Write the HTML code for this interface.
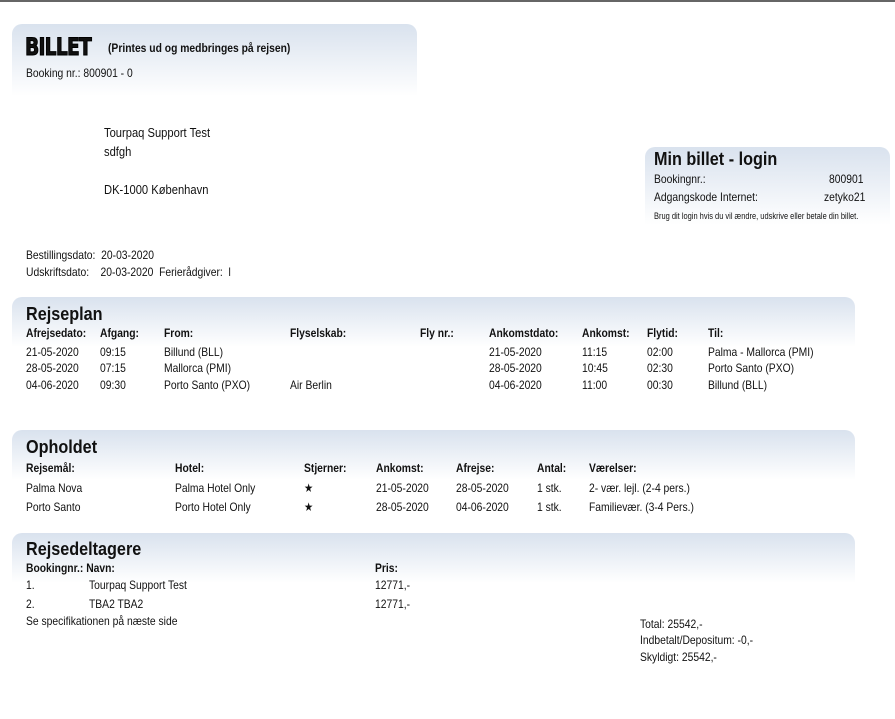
<!DOCTYPE html>
<html><head><meta charset="utf-8"><style>
body{margin:0;width:895px;height:719px;position:relative;background:#fff;overflow:hidden;font-family:"Liberation Sans",sans-serif;font-size:12px;color:#111}
.t{position:absolute;white-space:nowrap;line-height:14px;transform:scaleX(.86);transform-origin:left}
.b{font-weight:bold}
.box{position:absolute;border-radius:10px 10px 0 0;background:linear-gradient(#d9e2ee,#fff)}
.h{position:absolute;font-family:"Liberation Sans",sans-serif;font-size:18px;line-height:20px;white-space:nowrap;font-weight:bold;transform:scaleX(.9);transform-origin:left}
</style></head><body>
<div style="position:absolute;left:0;top:0;width:895px;height:2px;background:#666"></div>
<div class="box" style="left:12px;top:24px;width:405px;height:72px"></div>
<div class="t" style="left:25px;top:33px;font-family:'DejaVu Sans','Liberation Sans',sans-serif;font-weight:900;font-size:24px;line-height:28px;transform:scaleX(.78);letter-spacing:-1px;-webkit-text-stroke:1px #000">BILLET</div>
<div class="t b" style="left:108px;top:41px">(Printes ud og medbringes på rejsen)</div>
<div class="t" style="left:26px;top:66px">Booking nr.: 800901 - 0</div>

<div class="t" style="left:104px;top:126px;font-size:13px">Tourpaq Support Test</div>
<div class="t" style="left:104px;top:145px;font-size:13px">sdfgh</div>
<div class="t" style="left:104px;top:183px;font-size:13px">DK-1000 København</div>

<div class="box" style="left:645px;top:147px;width:245px;height:78px"></div>
<div class="h" style="left:654px;top:149px">Min billet - login</div>
<div class="t" style="left:654px;top:172px">Bookingnr.:</div>
<div class="t" style="left:829px;top:172px">800901</div>
<div class="t" style="left:654px;top:190px">Adgangskode Internet:</div>
<div class="t" style="left:824px;top:190px">zetyko21</div>
<div class="t" style="left:654px;top:209px;font-size:9px;transform:scaleX(.83)">Brug dit login hvis du vil ændre, udskrive eller betale din billet.</div>

<div class="t" style="left:26px;top:248px">Bestillingsdato:&nbsp; 20-03-2020</div>
<div class="t" style="left:26px;top:265px">Udskriftsdato:&nbsp;&nbsp;&nbsp; 20-03-2020&nbsp; Ferierådgiver:&nbsp; l</div>

<div class="box" style="left:12px;top:297px;width:843px;height:50px"></div>
<div class="h" style="left:26px;top:304px">Rejseplan</div>
<div class="t b" style="left:26px;top:326px">Afrejsedato:</div><div class="t b" style="left:100px;top:326px">Afgang:</div><div class="t b" style="left:164px;top:326px">From:</div><div class="t b" style="left:290px;top:326px">Flyselskab:</div><div class="t b" style="left:420px;top:326px">Fly nr.:</div><div class="t b" style="left:489px;top:326px">Ankomstdato:</div><div class="t b" style="left:582px;top:326px">Ankomst:</div><div class="t b" style="left:647px;top:326px">Flytid:</div><div class="t b" style="left:708px;top:326px">Til:</div>
<div class="t" style="left:26px;top:345px">21-05-2020</div><div class="t" style="left:100px;top:345px">09:15</div><div class="t" style="left:164px;top:345px">Billund (BLL)</div><div class="t" style="left:489px;top:345px">21-05-2020</div><div class="t" style="left:582px;top:345px">11:15</div><div class="t" style="left:647px;top:345px">02:00</div><div class="t" style="left:708px;top:345px">Palma - Mallorca (PMI)</div>
<div class="t" style="left:26px;top:361px">28-05-2020</div><div class="t" style="left:100px;top:361px">07:15</div><div class="t" style="left:164px;top:361px">Mallorca (PMI)</div><div class="t" style="left:489px;top:361px">28-05-2020</div><div class="t" style="left:582px;top:361px">10:45</div><div class="t" style="left:647px;top:361px">02:30</div><div class="t" style="left:708px;top:361px">Porto Santo (PXO)</div>
<div class="t" style="left:26px;top:378px">04-06-2020</div><div class="t" style="left:100px;top:378px">09:30</div><div class="t" style="left:164px;top:378px">Porto Santo (PXO)</div><div class="t" style="left:290px;top:378px">Air Berlin</div><div class="t" style="left:489px;top:378px">04-06-2020</div><div class="t" style="left:582px;top:378px">11:00</div><div class="t" style="left:647px;top:378px">00:30</div><div class="t" style="left:708px;top:378px">Billund (BLL)</div>

<div class="box" style="left:12px;top:430px;width:843px;height:50px"></div>
<div class="h" style="left:26px;top:437px">Opholdet</div>
<div class="t b" style="left:26px;top:461px">Rejsemål:</div><div class="t b" style="left:175px;top:461px">Hotel:</div><div class="t b" style="left:304px;top:461px">Stjerner:</div><div class="t b" style="left:376px;top:461px">Ankomst:</div><div class="t b" style="left:456px;top:461px">Afrejse:</div><div class="t b" style="left:537px;top:461px">Antal:</div><div class="t b" style="left:589px;top:461px">Værelser:</div>
<div class="t" style="left:26px;top:481px">Palma Nova</div><div class="t" style="left:175px;top:481px">Palma Hotel Only</div><div class="t" style="left:304px;top:481px">★</div><div class="t" style="left:376px;top:481px">21-05-2020</div><div class="t" style="left:456px;top:481px">28-05-2020</div><div class="t" style="left:537px;top:481px">1 stk.</div><div class="t" style="left:589px;top:481px">2- vær. lejl. (2-4 pers.)</div>
<div class="t" style="left:26px;top:500px">Porto Santo</div><div class="t" style="left:175px;top:500px">Porto Hotel Only</div><div class="t" style="left:304px;top:500px">★</div><div class="t" style="left:376px;top:500px">28-05-2020</div><div class="t" style="left:456px;top:500px">04-06-2020</div><div class="t" style="left:537px;top:500px">1 stk.</div><div class="t" style="left:589px;top:500px">Familievær. (3-4 Pers.)</div>

<div class="box" style="left:12px;top:533px;width:843px;height:50px"></div>
<div class="h" style="left:26px;top:539px">Rejsedeltagere</div>
<div class="t b" style="left:26px;top:561px">Bookingnr.: Navn:</div><div class="t b" style="left:375px;top:561px">Pris:</div>
<div class="t" style="left:26px;top:578px">1.</div><div class="t" style="left:89px;top:578px">Tourpaq Support Test</div><div class="t" style="left:375px;top:578px">12771,-</div>
<div class="t" style="left:26px;top:597px">2.</div><div class="t" style="left:89px;top:597px">TBA2 TBA2</div><div class="t" style="left:375px;top:597px">12771,-</div>
<div class="t" style="left:26px;top:614px">Se specifikationen på næste side</div>
<div class="t" style="left:640px;top:617px">Total: 25542,-</div>
<div class="t" style="left:640px;top:633px">Indbetalt/Depositum: -0,-</div>
<div class="t" style="left:640px;top:650px">Skyldigt: 25542,-</div>
</body></html>
